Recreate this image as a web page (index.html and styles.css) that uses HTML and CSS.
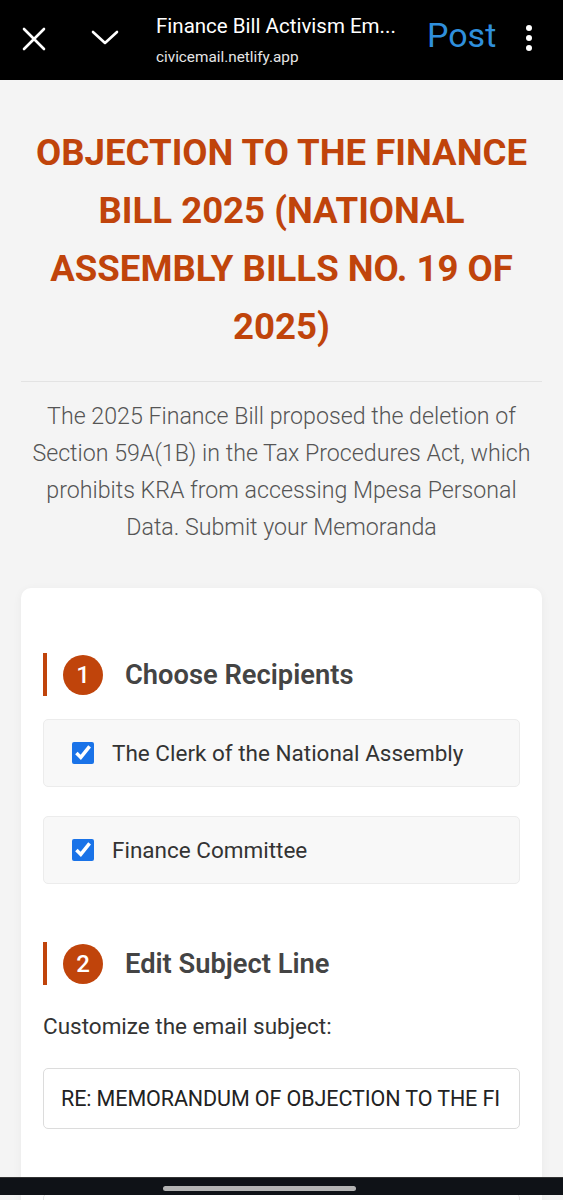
FILE: index.html
```html
<!DOCTYPE html>
<html>
<head>
  <title>Finance Bill Activism Email</title>
<meta name="viewport" content="width=device-width, initial-scale=1">
<link rel="stylesheet" href="styles.css">
</head>
<body>

<!--browser top bar-->
<div class="appbar">
  <svg class="ico-close" width="24" height="24" viewBox="0 0 24 24"><path d="M2 2L22 22M22 2L2 22" stroke="#fff" stroke-width="2.6" stroke-linecap="round"/></svg>
  <svg class="ico-down" width="28" height="16" viewBox="0 0 28 16"><path d="M2 2L14 13L26 2" fill="none" stroke="#fff" stroke-width="2.6" stroke-linecap="round" stroke-linejoin="round"/></svg>
  <div class="pagetitle">
    <div class="pt-name">Finance Bill Activism Em...</div>
    <div class="pt-url">civicemail.netlify.app</div>
  </div>
  <div class="postbtn">Post</div>
  <div class="dots"><span></span><span></span><span></span></div>
</div>

<div class="page">
  <h1 class="title">OBJECTION TO THE FINANCE BILL 2025 (NATIONAL ASSEMBLY BILLS NO. 19 OF 2025)</h1>
  <hr class="divider">
  <p class="intro">The 2025 Finance Bill proposed the deletion of Section 59A(1B) in the Tax Procedures Act, which prohibits KRA from accessing Mpesa Personal Data. Submit your Memoranda</p>

  <div class="card">
    <div class="step-head"><span class="num">1</span><h2>Choose Recipients</h2></div>
    <label class="recip"><input type="checkbox" checked> The Clerk of the National Assembly</label>
    <label class="recip"><input type="checkbox" checked> Finance Committee</label>

    <div class="step-head step2"><span class="num">2</span><h2>Edit Subject Line</h2></div>
    <p class="hint">Customize the email subject:</p>
    <div class="subject-wrap">
      <input class="subject" type="text" value="RE: MEMORANDUM OF OBJECTION TO THE FINANCE BILL 2025">
    </div>
    <div class="nextbox"></div>
  </div>
</div>

<!--android nav bar-->
<div class="navbar"><div class="pill"></div></div>

</body>
</html>
```

FILE: styles.css
```css
/*page styles*/
body {
  margin: 0;
  background-color: #f4f4f4;
  font-family: Roboto, "Liberation Sans", Arial, sans-serif;
}

.appbar {
  height: 80px;
  background-color: #000;
  display: flex;
  align-items: center;
  color: #fff;
}

.ico-close {
  margin-left: 22px;
  margin-top: -2px;
}

.ico-down {
  margin-left: 45px;
  margin-top: -4px;
}

.pagetitle {
  margin-left: 37px;
  width: 266px;
  margin-top: 0;
}

.pt-name {
  font-size: 20.5px;
  line-height: 24px;
  white-space: nowrap;
}

.pt-url {
  font-size: 15.3px;
  line-height: 20px;
  margin-top: 9px;
  color: #e6e6e6;
}

.postbtn {
  margin-left: 5px;
  font-size: 34px;
  color: #2f8fdc;
  margin-top: -10px;
}

.dots {
  margin-left: 30px;
  display: flex;
  flex-direction: column;
  gap: 4px;
  margin-top: -4px;
}

.dots span {
  width: 6px;
  height: 6px;
  border-radius: 50%;
  background: #fff;
}

.page {
  padding: 0 21px;
}

.title {
  margin: 44px 0 0 0;
  font-size: 36.6px;
  line-height: 58px;
  font-weight: 700;
  color: #c0440b;
  text-align: center;
}

.divider {
  border: none;
  border-top: 1px solid #e3e3e3;
  margin: 25px 0 0 0;
}

.intro {
  margin: 16px 0 0 0;
  font-size: 23.2px;
  line-height: 37px;
  font-weight: 300;
  color: #555;
  text-align: center;
}

.card {
  margin-top: 42px;
  background-color: #fff;
  border-radius: 10px;
  box-shadow: 0 2px 10px rgba(0, 0, 0, 0.05);
  padding: 65px 22px 0 22px;
  height: 700px;
}

.step-head {
  display: flex;
  align-items: center;
  height: 43px;
  border-left: 4px solid #c0440b;
  padding-left: 16px;
  margin-bottom: 23px;
}

.step2 {
  margin-top: 58px;
  margin-bottom: 0;
}

.num {
  width: 40px;
  height: 40px;
  border-radius: 50%;
  background-color: #c0440b;
  color: #fff;
  font-size: 24px;
  font-weight: 500;
  display: flex;
  align-items: center;
  justify-content: center;
}

.step-head h2 {
  margin: 0 0 0 22px;
  font-size: 27.3px;
  font-weight: 600;
  color: #444;
}

.recip {
  display: flex;
  align-items: center;
  height: 66px;
  background-color: #f8f8f8;
  border: 1px solid #ececec;
  border-radius: 5px;
  padding-left: 28px;
  margin-bottom: 29px;
  font-size: 22.5px;
  color: #333;
}

.recip input {
  width: 22px;
  height: 22px;
  margin: 0 18px 0 0;
  accent-color: #1a73e8;
}

.hint {
  margin: 28px 0 0 0;
  font-size: 22.5px;
  line-height: 26px;
  color: #333;
}

.subject-wrap {
  margin-top: 29px;
  height: 59px;
  padding: 0 18px 0 17px;
  border: 1px solid #dcdcdc;
  border-radius: 5px;
  background: #fff;
}

.subject {
  display: block;
  width: 100%;
  height: 59px;
  box-sizing: border-box;
  padding: 0;
  border: none;
  outline: none;
  background: transparent;
  font-family: Roboto, "Liberation Sans", Arial, sans-serif;
  font-size: 21.5px;
  letter-spacing: -0.1px;
  color: #222;
}

.nextbox {
  margin-top: 64px;
  height: 80px;
  border: 1px solid #e6e6e6;
  border-radius: 5px;
}

.navbar {
  position: fixed;
  left: 0;
  right: 0;
  top: 1177px;
  height: 17px;
  background-color: #0f1217;
  border-top: 1px solid #333;
}

.pill {
  margin: 8px 0 0 163px;
  width: 193px;
  height: 5px;
  border-radius: 3px;
  background: #b3b3b3;
}
```
